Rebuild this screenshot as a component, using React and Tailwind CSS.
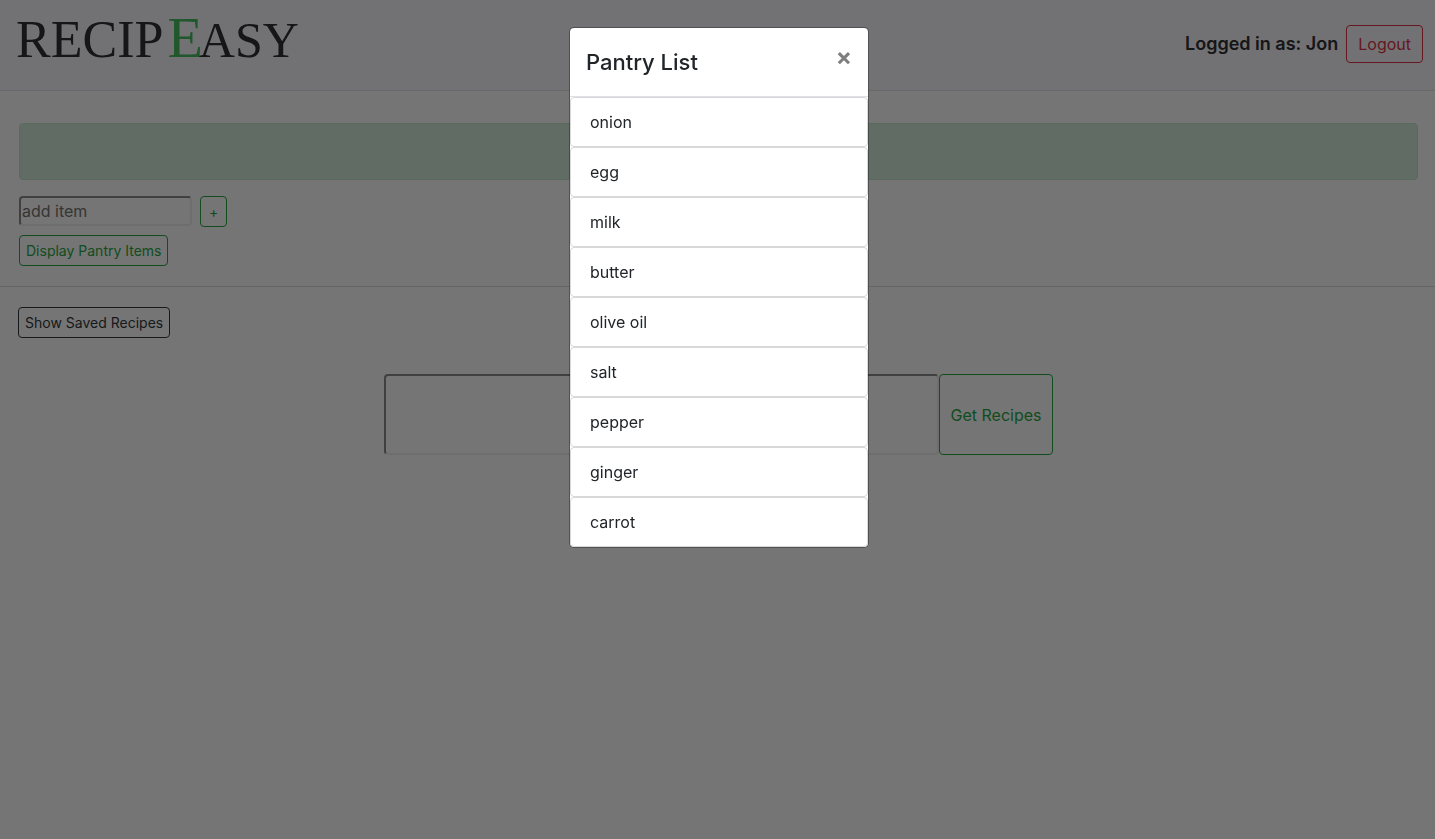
import React from "react";

const pantry = ["onion", "egg", "milk", "butter", "olive oil", "salt", "pepper", "ginger", "carrot"];

const smallButton = "rounded-[4px] border border-solid px-1.5 py-1 text-sm leading-[21px]";
const insetField =
  "rounded-[4px] border-2 border-b-[#f0f0f0] border-l-[#8c8c8c] border-r-[#f0f0f0] border-t-[#8c8c8c]";

function Header() {
  return (
    <header className="flex h-[91px] items-start justify-between border-b border-[#dee2e6] bg-[#f8f8fd] pl-4 pr-3">
      <a
        href="#home"
        className="mt-1 flex items-baseline font-['Liberation_Serif',serif] text-[52px] leading-[68px] text-[#303034]"
      >
        RECIP
        <span className="ml-1 text-[58px] leading-[68px] text-[#46c060]">E</span>
        <span className="-ml-1 text-[50px] leading-[68px]">ASY</span>
      </a>
      <div className="flex items-center gap-2 pt-[25px]">
        <h5 className="text-lg font-semibold leading-6 text-[#303034]">Logged in as: Jon</h5>
        <button className="h-[38px] rounded-[4px] border border-[#dc3545] px-[11px] text-base leading-6 text-[#dc3545]">
          Logout
        </button>
      </div>
    </header>
  );
}

function PantryDialog() {
  return (
    <div className="fixed inset-0 flex items-start justify-center bg-black/54 pl-[3px] pt-[27px]">
      <div
        role="dialog"
        aria-modal="true"
        aria-labelledby="pantry-title"
        className="w-[300px] rounded-[5px] border border-black/30 bg-white bg-clip-padding"
      >
        <div className="flex items-start justify-between border-b border-[#dee2e6] p-4">
          <h4 id="pantry-title" className="text-[22px] font-medium leading-9">Pantry List</h4>
          <button aria-label="Close" className="text-2xl font-bold leading-[26px] text-[#7f7f7f]">×</button>
        </div>
        <ul>
          {pantry.map((item) => (
            <li key={item} className="rounded-[4px] border border-[#d8d8d8] px-[19px] py-3 text-base leading-6">
              {item}
            </li>
          ))}
        </ul>
      </div>
    </div>
  );
}

export default function App() {
  return (
    <div className="min-h-screen bg-white font-[Inter,sans-serif] text-base text-[#212529]">
      <Header />
      <main>
        <section className="border-b border-[#dcdcdc] pb-5 pl-[19px] pr-[17px] pt-8">
          <div role="alert" className="h-[57px] rounded-[4px] border border-[#c3e6cb] bg-[#d4edda]" />
          <form className="mt-4 flex items-start gap-2">
            <input
              aria-label="Pantry item"
              placeholder="add item"
              className={`${insetField} h-[30px] w-[173px] px-px text-base placeholder:text-[#757575]`}
            />
            <button type="button" className="rounded-[4px] border border-[#28a745] px-2 py-1 text-sm leading-[21px] text-[#28a745]">
              +
            </button>
          </form>
          <button className={`${smallButton} mt-2 border-[#28a745] text-[#28a745]`}>
            Display Pantry Items
          </button>
        </section>
        <section className="pl-[18px] pr-4 pt-5">
          <button className={`${smallButton} border-[#343a40] text-[#343a40]`}>
            Show Saved Recipes
          </button>
          <form className="mt-9 flex justify-center">
            <input
              aria-label="Ingredients"
              className={`${insetField} h-[81px] w-[555px] px-2`}
            />
            <button type="button" className="rounded-[4px] border border-[#28a745] px-[11px] text-base text-[#28a745]">
              Get Recipes
            </button>
          </form>
        </section>
      </main>
      <PantryDialog />
    </div>
  );
}
